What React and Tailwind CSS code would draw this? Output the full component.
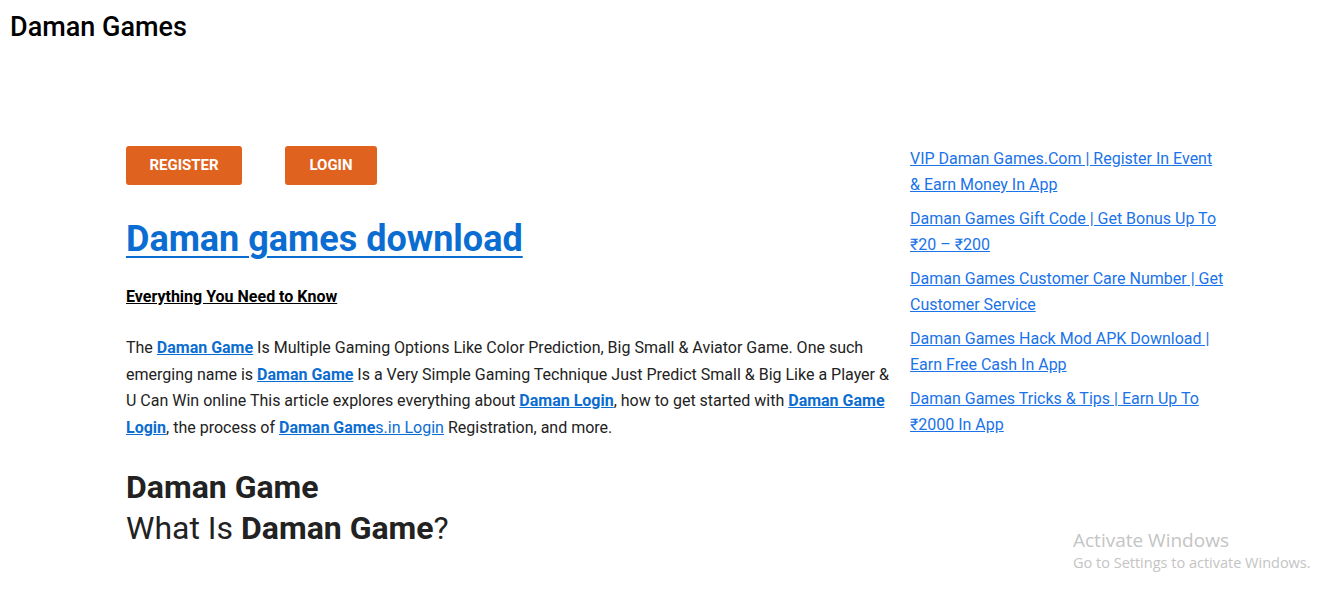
import React from "react";

const A = ({ children }) => (
  <a href="#" className="font-bold text-[#0b6dd1] underline">{children}</a>
);

const sideLinks = [
  "VIP Daman Games.Com | Register In Event & Earn Money In App",
  "Daman Games Gift Code | Get Bonus Up To ₹20 – ₹200",
  "Daman Games Customer Care Number | Get Customer Service",
  "Daman Games Hack Mod APK Download | Earn Free Cash In App",
  "Daman Games Tricks & Tips | Earn Up To ₹2000 In App",
];

export default function App() {
  return (
    <div className="relative h-[598px] w-[1342px] overflow-hidden bg-white font-['Roboto',sans-serif] text-[#222]">
      <header className="px-[10px] pt-[10px]">
        <h1 className="text-[27px] font-medium leading-[34px] text-black">Daman Games</h1>
      </header>
      <div className="flex pl-[126px] pt-[102px]">
        <main className="w-[764px]">
          <div className="flex gap-[43px]">
            <button className="h-[39px] w-[116px] rounded-[3px] bg-[#e0621f] text-[15px] font-bold text-white">REGISTER</button>
            <button className="h-[39px] w-[92px] rounded-[3px] bg-[#e0621f] text-[15px] font-bold text-white">LOGIN</button>
          </div>
          <h2 className="mt-[30px] text-[36px] font-bold leading-[48px]">
            <a href="#" className="text-[#0b6dd1] underline decoration-2 underline-offset-[5px]">Daman games download</a>
          </h2>
          <p className="mt-[22px] text-[16px] font-bold leading-[24px] text-black underline">Everything You Need to Know</p>
          <p className="mt-[26px] text-[16px] leading-[26.5px] text-[#222]">
            The <A>Daman Game</A> Is Multiple Gaming Options Like Color Prediction, Big Small &amp; Aviator Game. One such emerging name is <A>Daman Game</A> Is a Very Simple Gaming Technique Just Predict Small &amp; Big Like a Player &amp; U Can Win online This article explores everything about <A>Daman Login</A>, how to get started with <A>Daman Game Login</A>, the process of{" "}
            <a href="#" className="text-[#0b6dd1] underline"><span className="font-bold">Daman Game</span>s.in Login</a> Registration, and more.
          </p>
          <h2 className="mt-[26px] text-[32px] font-bold leading-[41px] text-[#222]">Daman Game</h2>
          <h2 className="text-[32px] font-normal leading-[41px] text-[#222]">What Is <span className="font-bold">Daman Game</span>?</h2>
        </main>
        <aside className="ml-[20px] w-[315px]">
          <ul className="flex flex-col gap-[8px]">
            {sideLinks.map((t) => (
              <li key={t} className="text-[16px] leading-[26px]">
                <a href="#" className="text-[#1a73e8] underline">{t}</a>
              </li>
            ))}
          </ul>
        </aside>
      </div>
      <div className="absolute left-[1073px] top-[528px] font-['Open_Sans',sans-serif] text-[#c4c4c4]">
        <div className="text-[19px] leading-[24px]">Activate Windows</div>
        <div className="text-[14.5px] leading-[22px]">Go to Settings to activate Windows.</div>
      </div>
    </div>
  );
}
